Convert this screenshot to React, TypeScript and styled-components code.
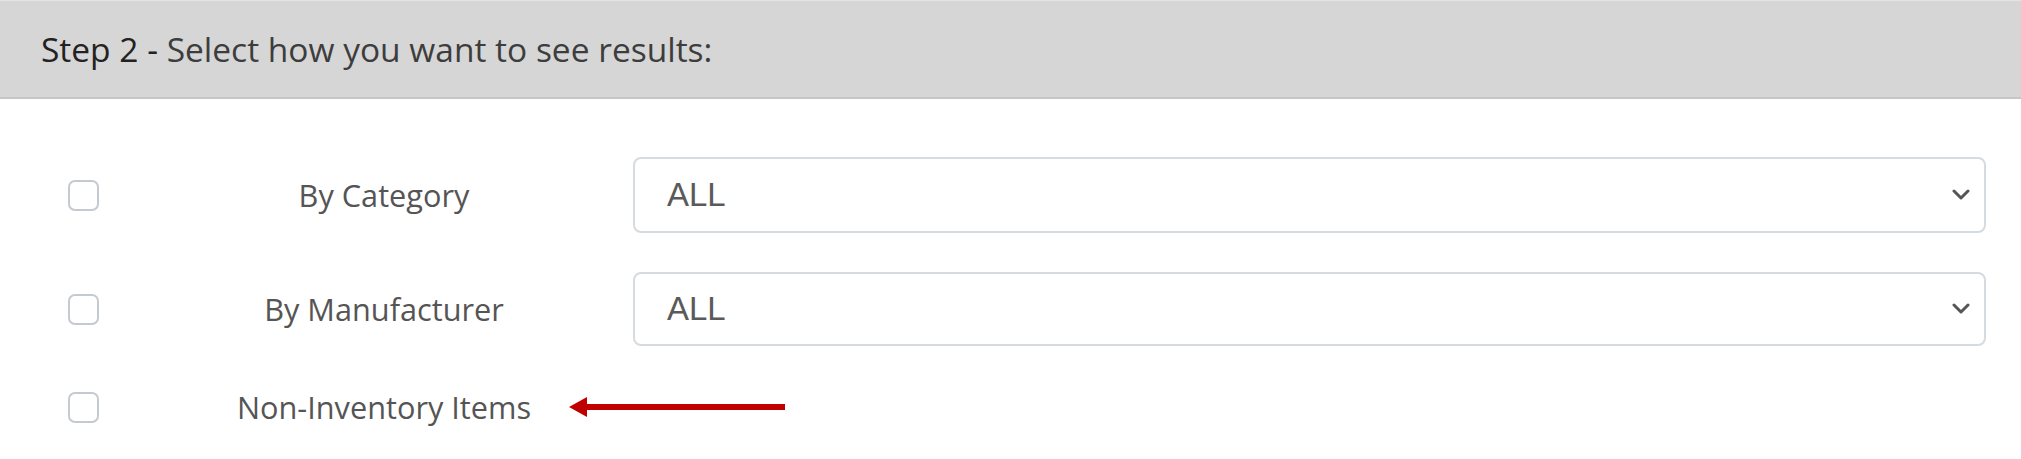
import React from "react";
import styled, { createGlobalStyle } from "styled-components";

const GlobalStyle = createGlobalStyle`
  html, body { margin: 0; padding: 0; background: #ffffff; }
  body { font-family: "Open Sans", "Liberation Sans", sans-serif; }
`;

const Page = styled.div`
  width: 2021px;
  height: 459px;
  background: #ffffff;
  overflow: hidden;
`;

const Header = styled.div`
  height: 99px;
  box-sizing: border-box;
  border-top: 1px solid #e4e4e4;
  border-bottom: 2px solid #c6c6c6;
  background: #d6d6d6;
  display: flex;
  align-items: center;
  padding-left: 41px;
  font-size: 33.5px;
  color: #3d3d3d;
`;

const StepLabel = styled.span`
  color: #222222;
  font-weight: 500;
`;

const Rows = styled.div`
  display: flex;
  flex-direction: column;
  gap: 39px;
  padding: 58px 35px 0 0;
`;

const Row = styled.div<{ $h: number }>`
  display: grid;
  grid-template-columns: 135px 498px 1fr;
  align-items: center;
  height: ${(p) => p.$h}px;
`;

const CheckCell = styled.div`
  padding-left: 68px;
  display: flex;
  align-items: center;
`;

const Check = styled.span`
  display: block;
  width: 31px;
  height: 31px;
  box-sizing: border-box;
  border: 2px solid #c5cad1;
  border-radius: 7px;
  background: #ffffff;
`;

const Label = styled.div`
  text-align: center;
  font-size: 30.7px;
  color: #555555;
  display: flex;
  align-items: center;
  justify-content: center;
`;

const LabelWithArrow = styled.div`
  position: relative;
  display: inline-block;
`;

const Arrow = styled.svg`
  position: absolute;
  left: calc(100% + 38px);
  top: 50%;
  transform: translateY(-50%);
`;

const Select = styled.div`
  height: 100%;
  box-sizing: border-box;
  border: 2px solid #d6dbe0;
  border-radius: 8px;
  display: flex;
  align-items: center;
  justify-content: space-between;
  padding: 0 14px 0 32px;
  font-family: "Liberation Sans", Arial, sans-serif;
  font-size: 33px;
  color: #5a5a5a;
`;

const Chevron = () => (
  <svg width="18" height="12" viewBox="0 0 18 12">
    <path d="M2 2 L9 9 L16 2" fill="none" stroke="#555" strokeWidth="3" strokeLinecap="round" strokeLinejoin="round" />
  </svg>
);

export default function App() {
  return (
    <Page>
      <GlobalStyle />
      <Header>
        <StepLabel>Step 2 -</StepLabel>&nbsp;Select how you want to see results:
      </Header>
      <Rows>
        <Row $h={76}>
          <CheckCell><Check /></CheckCell>
          <Label>By Category</Label>
          <Select>ALL<Chevron /></Select>
        </Row>
        <Row $h={74}>
          <CheckCell><Check /></CheckCell>
          <Label>By Manufacturer</Label>
          <Select>ALL<Chevron /></Select>
        </Row>
        <Row $h={44}>
          <CheckCell><Check /></CheckCell>
          <Label>
            <LabelWithArrow>
              Non-Inventory Items
              <Arrow width="216" height="22" viewBox="0 0 216 22">
                <polygon points="0,11 18,1 18,21" fill="#c00000" />
                <rect x="16" y="8" width="200" height="6" fill="#c00000" />
              </Arrow>
            </LabelWithArrow>
          </Label>
          <div />
        </Row>
      </Rows>
    </Page>
  );
}
